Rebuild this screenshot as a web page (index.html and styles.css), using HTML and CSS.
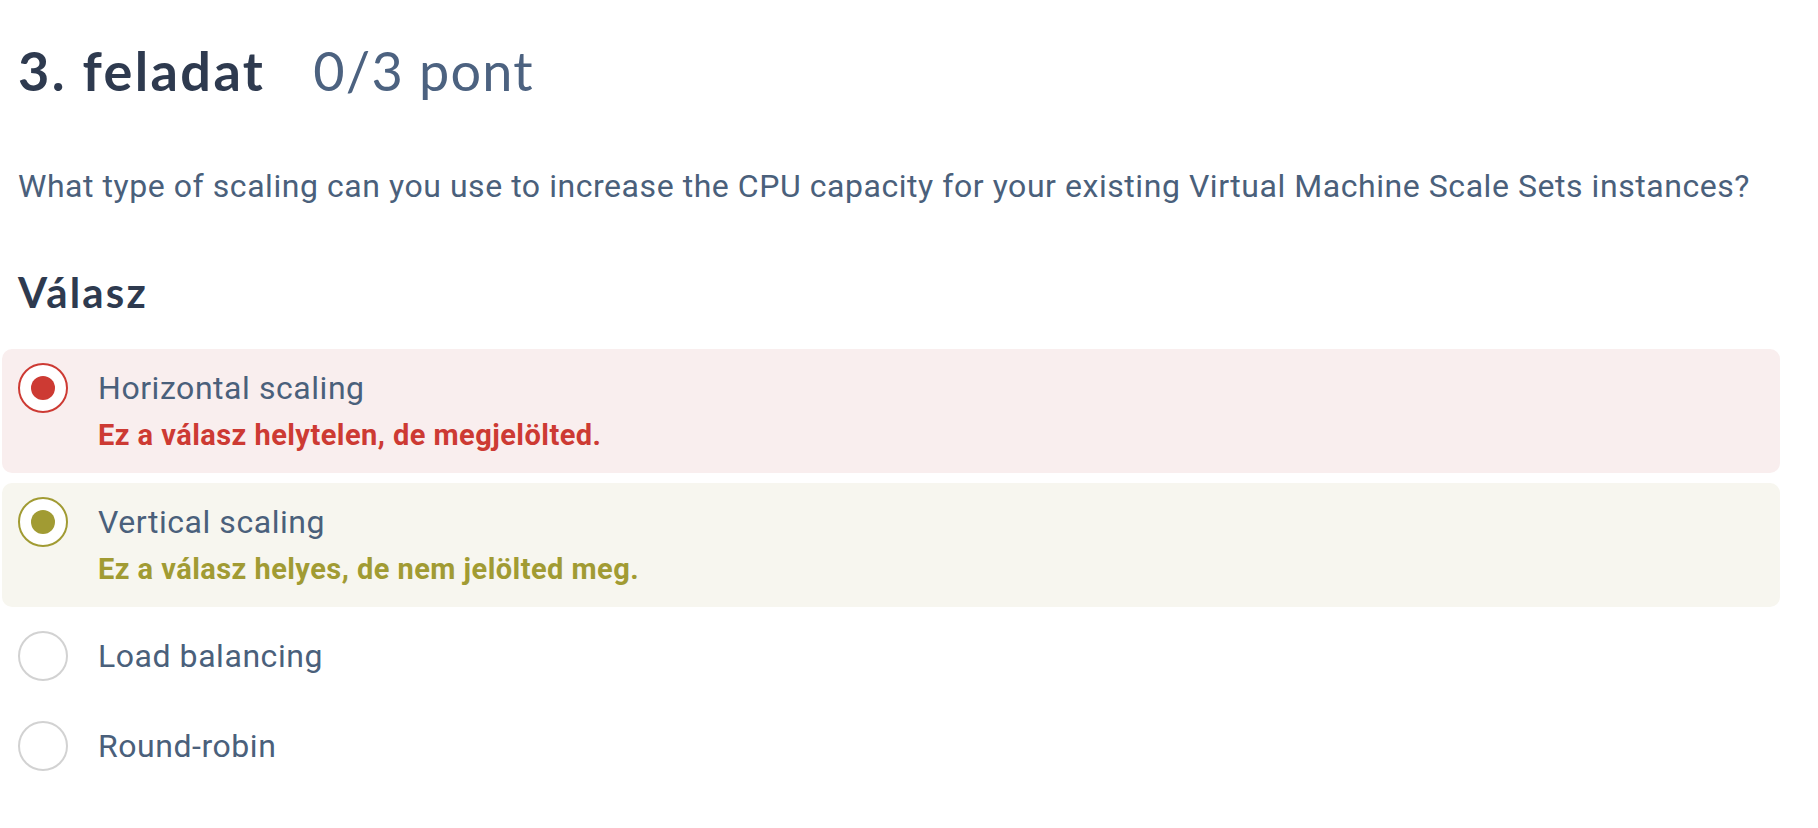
FILE: index.html
```html
<!DOCTYPE html>
<html lang="hu">
<head>
<meta charset="utf-8">
<title>3. feladat</title>
<link rel="stylesheet" href="styles.css">
</head>
<body>
<main class="page">
  <h1 class="task-title"><span class="task-name">3. feladat</span><span class="task-points">0/3 pont</span></h1>
  <p class="question">What type of scaling can you use to increase the CPU capacity for your existing Virtual Machine Scale Sets instances?</p>
  <h2 class="answer-title">Válasz</h2>
  <ul class="options">
    <li class="option option--wrong">
      <span class="radio radio--wrong"><span class="dot"></span></span>
      <div class="option-body">
        <div class="option-label">Horizontal scaling</div>
        <div class="feedback feedback--wrong">Ez a válasz helytelen, de megjelölted.</div>
      </div>
    </li>
    <li class="option option--missed">
      <span class="radio radio--missed"><span class="dot"></span></span>
      <div class="option-body">
        <div class="option-label">Vertical scaling</div>
        <div class="feedback feedback--missed">Ez a válasz helyes, de nem jelölted meg.</div>
      </div>
    </li>
    <li class="option">
      <span class="radio"></span>
      <div class="option-body">
        <div class="option-label">Load balancing</div>
      </div>
    </li>
    <li class="option">
      <span class="radio"></span>
      <div class="option-body">
        <div class="option-label">Round-robin</div>
      </div>
    </li>
  </ul>
</main>
</body>
</html>
```

FILE: styles.css
```css
* { box-sizing: border-box; }

html, body {
  margin: 0;
  padding: 0;
  background: #ffffff;
}

.page {
  padding: 39px 38px 0 18px;
  font-family: Roboto, "Liberation Sans", sans-serif;
}

.task-title {
  margin: 0;
  display: flex;
  align-items: baseline;
  gap: 48px;
  font-family: Lato, "Noto Sans", sans-serif;
  font-size: 54px;
  line-height: 64px;
  font-weight: 700;
  letter-spacing: 2.4px;
}

.task-name { color: #2e3a4f; }

.task-points {
  color: #4c6280;
  font-weight: 400;
  letter-spacing: 1.2px;
}

.question {
  margin: 59px 0 0;
  font-size: 32px;
  line-height: 48px;
  letter-spacing: 0.55px;
  color: #4a607b;
  white-space: nowrap;
}

.answer-title {
  margin: 57px 0 0;
  font-family: Lato, "Noto Sans", sans-serif;
  font-size: 42px;
  line-height: 50px;
  font-weight: 700;
  letter-spacing: 2.2px;
  color: #2e3a4f;
}

.options {
  list-style: none;
  margin: 32px 0 0 -16px;
  padding: 0;
  display: flex;
  flex-direction: column;
  gap: 10px;
}

.option {
  display: flex;
  align-items: flex-start;
  gap: 30px;
  padding: 14px 16px 16px;
  border-radius: 10px;
}

.option--wrong { background: #f9eeee; }
.option--missed { background: #f7f6ef; }

.radio {
  flex: none;
  width: 50px;
  height: 50px;
  border-radius: 50%;
  border: 2px solid #d2d2d2;
  background: #ffffff;
  display: flex;
  align-items: center;
  justify-content: center;
}

.radio .dot {
  width: 24px;
  height: 24px;
  border-radius: 50%;
}

.radio--wrong { border-color: #cd3a33; }
.radio--wrong .dot { background: #cd3a33; }
.radio--missed { border-color: #a19b33; }
.radio--missed .dot { background: #a19b33; }

.option-label {
  font-size: 32px;
  line-height: 50px;
  letter-spacing: 0.55px;
  color: #4a607b;
}

.feedback {
  margin-top: 0;
  font-size: 29px;
  line-height: 44px;
  letter-spacing: 0.45px;
  font-weight: 700;
}

.feedback--wrong { color: #cd3a33; }
.feedback--missed { color: #a19b33; }
```
